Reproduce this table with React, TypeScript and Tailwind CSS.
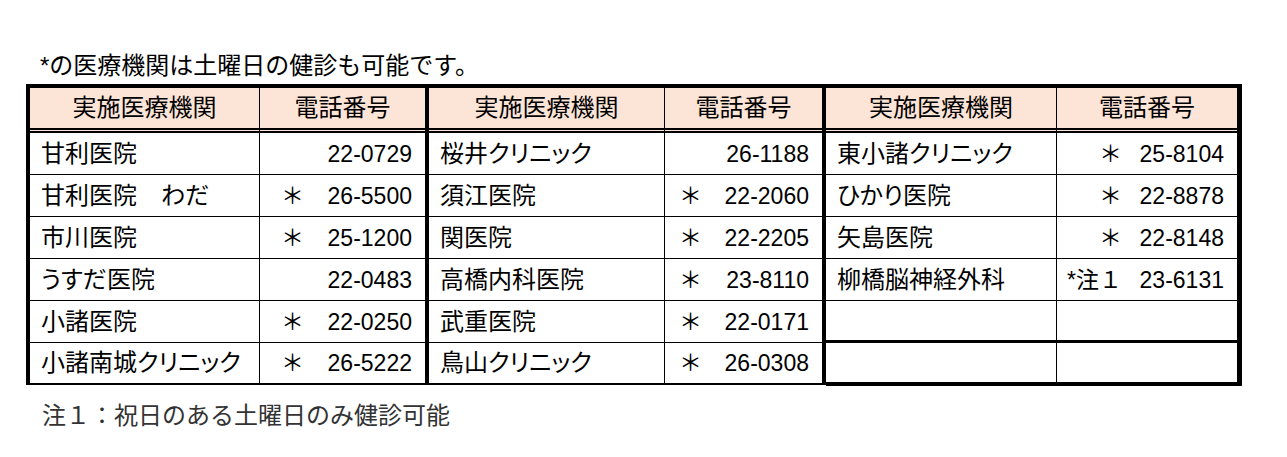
import React from 'react';

type Row = { name: string; mark: string; tel: string };

const font = { fontFamily: '"Liberation Sans", "Noto Sans CJK JP", sans-serif' };

const block1: Row[] = [
  { name: '甘利医院', mark: '', tel: '22-0729' },
  { name: '甘利医院　わだ', mark: '＊', tel: '26-5500' },
  { name: '市川医院', mark: '＊', tel: '25-1200' },
  { name: 'うすだ医院', mark: '', tel: '22-0483' },
  { name: '小諸医院', mark: '＊', tel: '22-0250' },
  { name: '小諸南城クリニック', mark: '＊', tel: '26-5222' },
];

const block2: Row[] = [
  { name: '桜井クリニック', mark: '', tel: '26-1188' },
  { name: '須江医院', mark: '＊', tel: '22-2060' },
  { name: '関医院', mark: '＊', tel: '22-2205' },
  { name: '高橋内科医院', mark: '＊', tel: '23-8110' },
  { name: '武重医院', mark: '＊', tel: '22-0171' },
  { name: '鳥山クリニック', mark: '＊', tel: '26-0308' },
];

const block3: Row[] = [
  { name: '東小諸クリニック', mark: '＊', tel: '25-8104' },
  { name: 'ひかり医院', mark: '＊', tel: '22-8878' },
  { name: '矢島医院', mark: '＊', tel: '22-8148' },
  { name: '柳橋脳神経外科', mark: '*注１', tel: '23-6131' },
  { name: '', mark: '', tel: '' },
  { name: '', mark: '', tel: '' },
];

const Block = ({
  rows,
  cols,
  edge,
  third,
}: {
  rows: Row[];
  cols: string;
  edge: string;
  third?: boolean;
}) => (
  <div className={`grid ${cols} border-t-4 border-black ${edge}`}>
    <div className="flex h-[45px] items-center justify-center border-r border-b-[5px] border-double border-r-black border-b-black bg-[#fce4d6] pb-[1px] text-[24px]">
      実施医療機関
    </div>
    <div className="col-span-2 flex h-[45px] items-center justify-center border-b-[5px] border-double border-black bg-[#fce4d6] pb-[1px] text-[24px]">
      電話番号
    </div>
    {rows.map((r, i) => {
      const last = i === rows.length - 1;
      let line = 'h-[42px] border-b border-black';
      if (third && i === 4) line = 'h-[42px] border-b-[3px] border-black';
      else if (third && last) line = 'h-[43px] border-b-4 border-black';
      else if (last) line = 'h-[42px] border-b-2 border-black';
      return (
        <React.Fragment key={i}>
          <div
            className={`flex items-center whitespace-nowrap border-r border-r-black pl-[11px] text-[24px] [font-feature-settings:'palt'] ${line}`}
          >
            {r.name}
          </div>
          <div className={`flex items-center justify-end whitespace-nowrap pr-[11px] ${line}`}>{r.mark}</div>
          <div className={`flex items-center justify-end whitespace-nowrap pr-[13px] ${line}`}>{r.tel}</div>
        </React.Fragment>
      );
    })}
  </div>
);

export default function App() {
  return (
    <div className="h-[457px] w-[1287px] bg-white pt-[52px] text-[23px] text-black" style={font}>
      <div className="pl-[40px] text-[24px] leading-[28px]">*の医療機関は土曜日の健診も可能です。</div>
      <div className="mt-[4px] ml-[26px] flex items-start leading-[28px]">
        <Block rows={block1} cols="grid-cols-[230px_55px_110px]" edge="border-l-4 border-r-4" />
        <Block rows={block2} cols="grid-cols-[236px_48px_109px]" edge="border-r-4" />
        <Block rows={block3} cols="grid-cols-[231px_76px_104px]" edge="border-r-[5px]" third />
      </div>
      <div className="mt-[16px] pl-[42px] text-[24px] leading-[28px] text-[#333]">
        注１：祝日のある土曜日のみ健診可能
      </div>
    </div>
  );
}
